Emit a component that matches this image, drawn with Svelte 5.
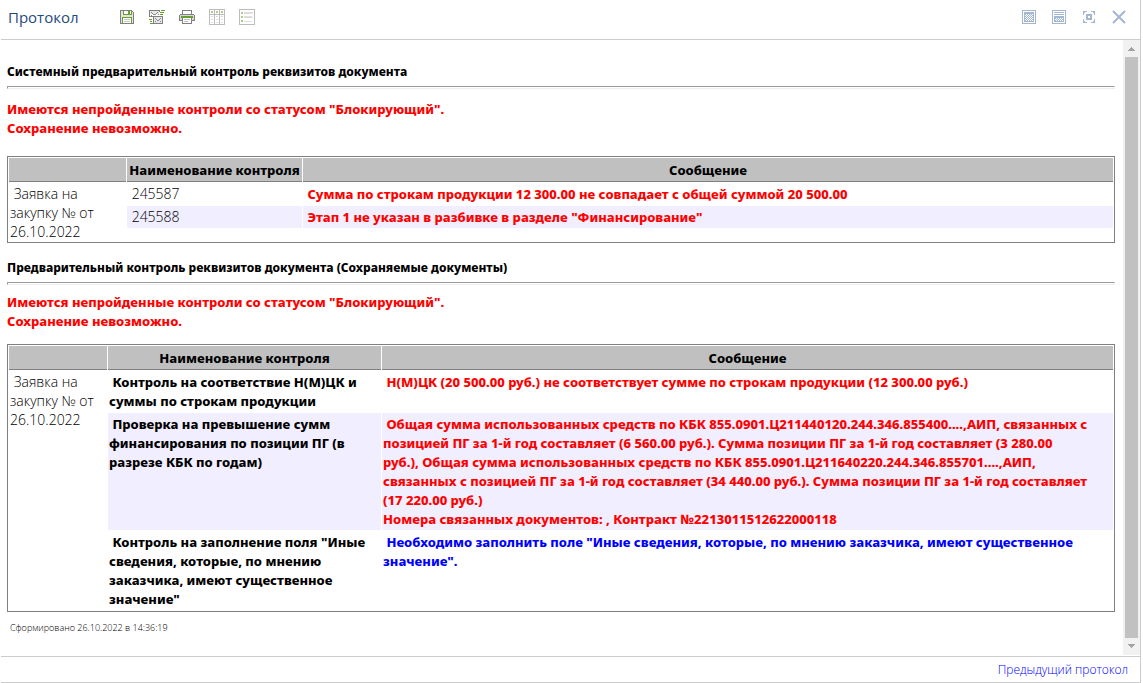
<script>
  const reports = [
    {
      title: 'Системный предварительный контроль реквизитов документа',
      kind: 'system',
      rows: [
        { name: '245587', plain: true, message: 'Сумма по строкам продукции 12 300.00 не совпадает с общей суммой 20 500.00' },
        { name: '245588', plain: true, message: 'Этап 1 не указан в разбивке в разделе "Финансирование"' }
      ]
    },
    {
      title: 'Предварительный контроль реквизитов документа (Сохраняемые документы)',
      kind: 'saved',
      rows: [
        {
          name: 'Контроль на соответствие Н(М)ЦК и суммы по строкам продукции',
          message: 'Н(М)ЦК (20 500.00 руб.) не соответствует сумме по строкам продукции (12 300.00 руб.)'
        },
        {
          name: 'Проверка на превышение сумм финансирования по позиции ПГ (в разрезе КБК по годам)',
          message:
            'Общая сумма использованных средств по КБК 855.0901.Ц211440120.244.346.855400....,АИП, связанных с\n' +
            'позицией ПГ за 1-й год составляет (6 560.00 руб.). Сумма позиции ПГ за 1-й год составляет (3 280.00\n' +
            'руб.), Общая сумма использованных средств по КБК 855.0901.Ц211640220.244.346.855701....,АИП,\n' +
            'связанных с позицией ПГ за 1-й год составляет (34 440.00 руб.). Сумма позиции ПГ за 1-й год составляет\n' +
            '(17 220.00 руб.)\n' +
            'Номера связанных документов: , Контракт №2213011512622000118'
        },
        {
          name: 'Контроль на заполнение поля "Иные сведения, которые, по мнению заказчика, имеют существенное значение"',
          info: true,
          message: 'Необходимо заполнить поле "Иные сведения, которые, по мнению заказчика, имеют существенное значение".'
        }
      ]
    }
  ];
</script>

<main class="window">
  <header>
    <h1>Протокол</h1>
    <div class="tools">
      <button aria-label="Сохранить">
        <svg viewBox="0 0 16 16">
          <path fill="#e3e3e3" d="M2 2h11l1 1v11H2z" />
          <path fill="#fff" d="M5 2h7v3H5zM4 9h8v5H4z" />
          <path fill="#808080" d="M1 1h12v1h1v1h1v12H1zM2 2v12h12V3h-1V2z" fill-rule="evenodd" />
          <path fill="#66a02c" d="M4 2h1v3h7V2h1v4H4zM9 2h2v3H9zM3 8h10v6h-1V9H4v5H3z" />
          <path fill="#c8c8c8" d="M5 10h6v1H5zM5 12h6v1H5z" />
        </svg>
      </button>
      <button aria-label="Отправить">
        <svg viewBox="0 0 16 16">
          <path fill="#808080" d="M0 1h11v2h-1V2H1v5h3v1H0zM4 7h10v8H4zM5 8v6h8V8z" fill-rule="evenodd" />
          <path fill="#e6e6e6" d="M1 2h9v3H1zM5 8h8v6H5z" />
          <path fill="#8c8c8c" d="M2 3h1v1H2zM3 4h1v1H3zM4 5h3v1H4zM7 4h1v1H7zM8 3h1v1H8zM2 6h1v1H2zM9 5h1v1H9zM6 9h1v1H6zM7 10h1v1H7zM8 11h2v1H8zM10 10h1v1h-1zM11 9h1v1h-1zM6 12h1v1H6zM11 12h1v1h-1z" />
          <path fill="#66a02c" d="M12 1h4v1h-4zM11 3h4v1h-4zM11 5h3v1h-3zM0 10h3v1H0zM1 12h2v1H1zM1 14h3v1H1z" />
        </svg>
      </button>
      <button aria-label="Печать">
        <svg viewBox="0 0 16 16">
          <path fill="#808080" d="M3 1h10v4h2v1h1v6h-3v3H3v-3H0V6h1V5h2z" />
          <path fill="#fff" d="M4 2h8v3H4zM4 9h8v5H4z" />
          <path fill="#d8d8d8" d="M1 6h14v5h-2V9H3v2H1z" />
          <path fill="#66a02c" d="M2 7h12v2H2z" />
          <path fill="#c0c0c0" d="M5 10h6v1H5zM5 12h4v1H5z" />
        </svg>
      </button>
      <button aria-label="Таблица">
        <svg viewBox="0 0 16 16">
          <path fill="#bcbcbc" d="M0 0h16v16H0zM1 1v4h4V1zM6 1v4h4V1zM11 1v4h4V1zM1 6v9h4V6zM6 6v9h4V6zM11 6v9h4V6z" fill-rule="evenodd" />
          <path fill="#abd08a" d="M2 2h2v2H2zM7 2h2v2H7zM12 2h2v2h-2z" />
          <path fill="#dcdcdc" d="M2 7h2v1H2zM7 7h2v1H7zM12 7h2v1h-2zM2 10h2v1H2zM7 10h2v1H7zM12 10h2v1h-2zM2 13h2v1H2zM7 13h2v1H7zM12 13h2v1h-2z" />
        </svg>
      </button>
      <button aria-label="Список">
        <svg viewBox="0 0 16 16">
          <path fill="#bcbcbc" d="M0 0h16v16H0zM1 1v14h14V1z" fill-rule="evenodd" />
          <path fill="#abd08a" d="M2 3h2v2H2zM2 7h2v2H2zM2 11h2v2H2z" />
          <path fill="#dedede" d="M5 4h8v1H5zM5 8h9v1H5zM5 12h8v1H5zM5 3h9v1H5zM5 7h8v1H5z" />
        </svg>
      </button>
    </div>
    <div class="tools">
      <button aria-label="Во весь экран">
        <svg viewBox="0 0 16 16">
          <path fill="#a3b6d2" d="M1 1h14v14H1zM2 2v12h12V2z" fill-rule="evenodd" />
          <path fill="#a3b6d2" d="M3 3h10v10H3zM4 5v7h8V5z" fill-rule="evenodd" />
          <path stroke="#a3b6d2" stroke-dasharray="1 1" d="M4 5.500h8M5 6.500h7M4 7.500h8M5 8.500h7M4 9.500h8M5 10.500h7M4 11.500h8" />
        </svg>
      </button>
      <button aria-label="Половина экрана">
        <svg viewBox="0 0 16 16">
          <path fill="#a3b6d2" d="M1 1h14v14H1zM2 2v12h12V2z" fill-rule="evenodd" />
          <path fill="#a3b6d2" d="M3 3h10v1H3zM3 5h10v1H3zM3 7h10v6H3zM4 9v3h8V9z" fill-rule="evenodd" />
          <path stroke="#a3b6d2" stroke-dasharray="1 1" d="M4 9.500h8M5 10.500h7M4 11.500h8" />
        </svg>
      </button>
      <button aria-label="Восстановить">
        <svg viewBox="0 0 16 16">
          <path fill="#a3b6d2" d="M2 2h4v1H4v1H3v2H2zM10 2h4v4h-1V4h-1V3h-2zM2 10h1v2h1v1h2v1H2zM13 10h1v4h-4v-1h2v-1h1zM5 5h6v6H5zM7 7v2h2V7z" fill-rule="evenodd" />
        </svg>
      </button>
      <button aria-label="Закрыть">
        <svg viewBox="0 0 16 16" class="cross"><path stroke="#a3b6d2" stroke-width="2" d="M2 2l12 12M14 2l-12 12" /></svg>
      </button>
    </div>
  </header>

  <div class="body">
    <div class="content">
      {#each reports as report}
        <section class={report.kind}>
          <h2>{report.title}</h2>
          <hr />
          <p class="alert">Имеются непройденные контроли со статусом "Блокирующий".<br />Сохранение невозможно.</p>
          <table>
            <colgroup><col class="doc" /><col class="name" /><col /></colgroup>
            <thead>
              <tr><th></th><th>Наименование контроля</th><th>Сообщение</th></tr>
            </thead>
            <tbody>
              {#each report.rows as row, i}
                <tr class:odd={i % 2 === 1}>
                  {#if i === 0}
                    <td class="source" rowspan={report.kind === 'system' ? report.rows.length + 1 : report.rows.length}>&nbsp;Заявка на закупку № от 26.10.2022</td>
                  {/if}
                  <td class:plain={row.plain}>&nbsp;{row.name}</td>
                  <td class="message" class:info={row.info}>&nbsp;{row.message}</td>
                </tr>
              {/each}
              {#if report.kind === 'system'}
                <tr class="filler"></tr>
              {/if}
            </tbody>
          </table>
        </section>
      {/each}
      <p class="stamp">Сформировано 26.10.2022 в 14:36:19</p>
    </div>
    <div class="scrollbar" aria-hidden="true">
      <svg viewBox="0 0 17 17"><path fill="#a3a3a3" d="M5 11h7v-1h-1V9h-1V8H9V7H8v1H7v1H6v1H5z" /></svg>
      <div class="thumb"></div>
      <svg viewBox="0 0 17 17"><path fill="#a3a3a3" d="M5 6h7v1h-1v1h-1v1H9v1H8V9H7V8H6V7H5z" /></svg>
    </div>
  </div>

  <footer><a href="#previous">Предыдущий протокол</a></footer>
</main>

<style>
  .window {
    box-sizing: border-box;
    height: 100vh;
    margin: 0 2px 0 1px;
    display: flex;
    flex-direction: column;
    border-right: 1px solid #ccc;
    border-bottom: 1px solid #ccc;
    background: #fff;
    color: #000;
    font: 13px/19px "Noto Sans", sans-serif;
  }
  header {
    flex: none;
    display: flex;
    align-items: center;
    height: 40px;
    padding: 0 6px 5px 7px;
    box-sizing: border-box;
    border-bottom: 1px solid #ccc;
  }
  h1 {
    width: 104px;
    margin: 0;
    color: #1f4a7d;
    font: 15px/20px "Open Sans", sans-serif;
  }
  .tools { display: flex; }
  .tools:last-child { margin-left: auto; }
  button {
    display: grid;
    place-items: center;
    width: 30px;
    height: 30px;
    padding: 0;
    border: 0;
    background: none;
  }
  button svg { width: 16px; height: 16px; shape-rendering: crispEdges; }
  button .cross { shape-rendering: auto; }
  .body { flex: 1; min-height: 0; display: flex; }
  .content { flex: 1; min-width: 0; padding: 22px 8px 0 6px; overflow: hidden; }
  h2 { margin: 0; font-size: 12px; line-height: 20px; font-weight: 800; }
  hr {
    height: 1px;
    margin: 4px 0 0;
    border: 1px solid;
    border-color: #9a9a9a #eee #eee #9a9a9a;
    box-sizing: content-box;
  }
  .alert { margin: 11px 0 0; color: #f00; font-weight: 800; }
  .saved .alert { margin-top: 8px; }
  table {
    width: 100%;
    table-layout: fixed;
    border: 1px solid #808080;
    border-collapse: separate;
    border-spacing: 1px;
    font-weight: 800;
  }
  .system table { margin: 18px 0 15px; }
  .saved table { margin: 13px 0 6px; }
  .system .doc { width: 117px; }
  .system .name { width: 175px; }
  .saved .doc { width: 98px; }
  .saved .name { width: 273px; }
  th {
    height: 21px;
    padding: 2px 0 0;
    border-bottom: 1px solid #808080;
    background: #c0c0c0;
    font-weight: 800;
    white-space: nowrap;
  }
  td { padding: 2px 1px 1px; vertical-align: top; }
  td.source { padding: 1px 1px 0; }
  td.plain { padding: 1px 1px 2px; }
  .source, .plain { font-family: "Open Sans", sans-serif; font-size: 14px; font-weight: 300; }
  .odd td { background: #f0eeff; }
  .filler { height: 12px; }
  .message { color: #f00; white-space: pre-line; }
  .info { color: #00f; }
  .stamp { margin: 0 3px; font: 300 9px/19px "Open Sans", sans-serif; }
  .scrollbar {
    flex: none;
    width: 17px;
    display: flex;
    flex-direction: column;
    margin-bottom: 1px;
    background: #f1f1f1;
  }
  .scrollbar svg { flex: none; width: 17px; height: 17px; }
  .thumb { flex: 1; margin: 0 2px; background: #c1c1c1; }
  footer {
    flex: none;
    height: 25px;
    padding-right: 12px;
    border-top: 1px solid #ccc;
    text-align: right;
    font: 300 12px/25px "Open Sans", sans-serif;
  }
  footer a { color: #00f; text-decoration: none; }
</style>
